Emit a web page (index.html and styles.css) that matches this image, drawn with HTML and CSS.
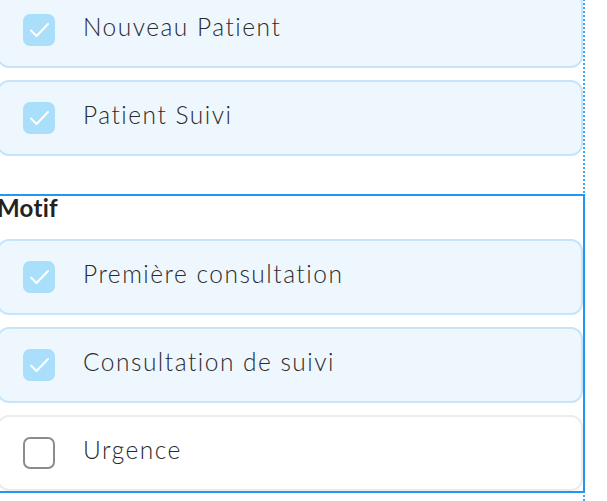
FILE: index.html
```html
<!DOCTYPE html>
<html lang="fr">
<head>
<meta charset="utf-8">
<title>Filtres</title>
<link rel="stylesheet" href="styles.css">
</head>
<body>
<div class="frame">
  <section class="group first">
    <div class="card checked">
      <span class="box"><svg viewBox="0 0 32 32" width="32" height="32"><path d="M8 16.5 L13.5 22 L25 10" fill="none" stroke="#fff" stroke-width="2" stroke-linecap="round" stroke-linejoin="round"/></svg></span>
      <span class="label">Nouveau Patient</span>
    </div>
    <div class="card checked">
      <span class="box"><svg viewBox="0 0 32 32" width="32" height="32"><path d="M8 16.5 L13.5 22 L25 10" fill="none" stroke="#fff" stroke-width="2" stroke-linecap="round" stroke-linejoin="round"/></svg></span>
      <span class="label">Patient Suivi</span>
    </div>
  </section>
  <section class="group selected">
    <h2 class="title">Motif</h2>
    <div class="card checked">
      <span class="box"><svg viewBox="0 0 32 32" width="32" height="32"><path d="M8 16.5 L13.5 22 L25 10" fill="none" stroke="#fff" stroke-width="2" stroke-linecap="round" stroke-linejoin="round"/></svg></span>
      <span class="label">Première consultation</span>
    </div>
    <div class="card checked">
      <span class="box"><svg viewBox="0 0 32 32" width="32" height="32"><path d="M8 16.5 L13.5 22 L25 10" fill="none" stroke="#fff" stroke-width="2" stroke-linecap="round" stroke-linejoin="round"/></svg></span>
      <span class="label">Consultation de suivi</span>
    </div>
    <div class="card">
      <span class="box"></span>
      <span class="label">Urgence</span>
    </div>
  </section>
</div>
</body>
</html>
```

FILE: styles.css
```css
html, body {
  margin: 0;
  padding: 0;
  background: #ffffff;
  overflow: hidden;
  height: 501px;
}

body {
  font-family: Lato, "Noto Sans", sans-serif;
}

.frame {
  margin-left: -5px;
  margin-top: -10px;
  width: 588px;
  height: 511px;
  border-right: 2px dotted #42a5f5;
}

.group {
  border: 2px solid transparent;
  margin-right: -2px;
  display: flex;
  flex-direction: column;
  gap: 12px;
}

.group.first {
  padding-bottom: 36px;
}

.group.selected {
  border-color: #2196f3;
}

.title {
  margin: 0 0 7px 0;
  font-size: 24px;
  line-height: 24px;
  font-weight: 700;
  color: #222222;
  letter-spacing: 0.3px;
}

.card {
  height: 76px;
  box-sizing: border-box;
  border: 2px solid #ececec;
  border-radius: 12px;
  background: #ffffff;
  display: flex;
  align-items: center;
  padding-left: 24px;
  gap: 28px;
}

.card.checked {
  background: #eff7fe;
  border-color: #c6e5fb;
}

.box {
  width: 32px;
  height: 32px;
  box-sizing: border-box;
  border: 2px solid #8c8c8c;
  border-radius: 7px;
  background: #ffffff;
  display: flex;
  flex-shrink: 0;
}

.card.checked .box {
  border: none;
  background: #a9dffa;
}

.box svg {
  display: block;
}

.label {
  font-size: 24.5px;
  line-height: 28px;
  font-weight: 300;
  letter-spacing: 1.5px;
  font-variant-ligatures: none;
  color: #2a2a2a;
  margin-bottom: 6px;
}
```
